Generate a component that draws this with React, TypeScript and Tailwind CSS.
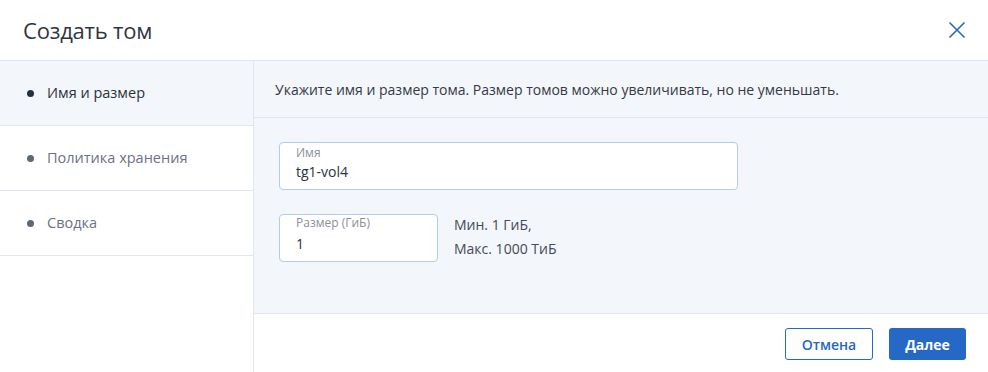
import React from 'react';

const steps = ['Имя и размер', 'Политика хранения', 'Сводка'];

export default function App() {
  const active = 0;

  return (
    <div className="w-[988px] h-[372px] bg-white flex flex-col text-[#2b323b] overflow-hidden" style={{ fontFamily: '"Open Sans", "Noto Sans", sans-serif' }}>
      <div className="h-[61px] shrink-0 flex items-center justify-between pl-[23px] pr-[21px] border-b border-[#dfe6f1]">
        <h1 className="text-[22px] leading-none text-[#2f3640] tracking-[-0.2px]">Создать том</h1>
        <button className="w-[20px] h-[20px] flex items-center justify-center text-[#2668c5]">
          <svg width="18" height="18" viewBox="0 0 18 18" fill="none" stroke="currentColor" strokeWidth="1.6">
            <path d="M1.5 1.5 L16.5 16.5 M16.5 1.5 L1.5 16.5" />
          </svg>
        </button>
      </div>

      <div className="flex flex-1 min-h-0">
        <div className="w-[254px] shrink-0 border-r border-[#dfe6f1] flex flex-col">
          {steps.map((s, i) => (
            <div
              key={s}
              className={`h-[65px] flex items-center pl-[27px] border-b border-[#dfe6f1] text-[14.5px] ${i === active ? 'bg-[#f3f6fb] text-[#2b323b]' : 'bg-white text-[#6b7280]'}`}
            >
              <span className={`w-[7px] h-[7px] rounded-full mr-[13px] ${i === active ? 'bg-[#24303f]' : 'bg-[#5f6875]'}`} />
              {s}
            </div>
          ))}
        </div>

        <div className="flex-1 flex flex-col">
          <div className="h-[57px] shrink-0 bg-[#f3f6fb] border-b border-[#dfe6f1] flex items-center pl-[21px] text-[14px] text-[#333a44]">
            Укажите имя и размер тома. Размер томов можно увеличивать, но не уменьшать.
          </div>

          <div className="flex-1 bg-[#f3f6fb] border-b border-[#dfe6f1] pt-[24px] pl-[25px] flex flex-col gap-[24px]">
            <div className="w-[459px] h-[48px] bg-white border border-[#b3cbed] rounded-[4px] pl-[16px] pt-[2px]">
              <div className="text-[12px] leading-[15px] text-[#8a919b]">Имя</div>
              <div className="text-[14px] leading-[20px] text-[#2b323b] mt-[2px]">tg1-vol4</div>
            </div>
            <div className="flex items-start">
              <div className="w-[159px] h-[48px] bg-white border border-[#b3cbed] rounded-[4px] pl-[16px]">
                <div className="text-[12px] leading-[15px] text-[#8a919b]">Размер (ГиБ)</div>
                <div className="text-[14px] leading-[20px] text-[#2b323b] mt-[4px]">1</div>
              </div>
              <div className="ml-[16px] -mt-[1px] text-[14px] leading-[24px] text-[#444b55]">
                <div>Мин. 1 ГиБ,</div>
                <div>Макс. 1000 ТиБ</div>
              </div>
            </div>
          </div>

          <div className="h-[58px] shrink-0 bg-white flex items-center justify-end gap-[16px] pr-[22px] pt-[2px]">
            <button className="w-[88px] h-[32px] border border-[#2668c5] rounded-[3px] text-[#2668c5] text-[14px] font-semibold bg-white">
              Отмена
            </button>
            <button className="w-[77px] h-[32px] bg-[#2668c5] rounded-[3px] text-white text-[14px] font-bold">
              Далее
            </button>
          </div>
        </div>
      </div>
    </div>
  );
}
